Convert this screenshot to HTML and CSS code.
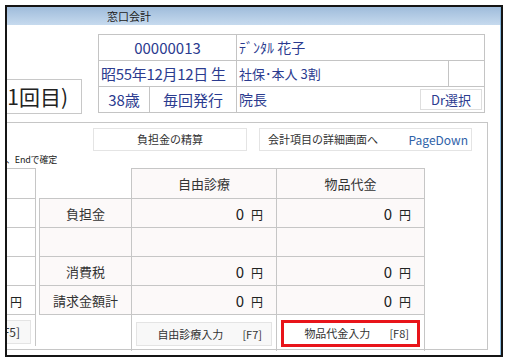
FILE: index.html
```html
<!DOCTYPE html>
<html lang="ja">
<head>
    <meta charset="UTF-8">
    <meta name="viewport" content="width=device-width, initial-scale=1.0">
    <title>窓口会計</title>
    <link rel="stylesheet" href="styles.css">
</head>
<body>

    <div class="window">
        <div class="titlebar">窓口会計</div>

        <div class="client">
            <!-- Patient header -->
            <div class="header">
                <div class="visit-box">1回目)</div>
                <table class="patient">
                    <colgroup>
                        <col class="c-age">
                        <col class="c-issue">
                        <col class="c-ins">
                        <col class="c-rest">
                    </colgroup>
                    <tr>
                        <td colspan="2" class="center">00000013</td>
                        <td colspan="2" class="name">ﾃﾞﾝﾀﾙ 花子</td>
                    </tr>
                    <tr>
                        <td colspan="2" class="birth">昭55年12月12日 生</td>
                        <td class="small">社保･本人 3割</td>
                        <td></td>
                    </tr>
                    <tr>
                        <td class="center">38歳</td>
                        <td class="center">毎回発行</td>
                        <td colspan="2">
                            <div class="doctor">
                                <span>院長</span>
                                <div class="dr-btn">Dr選択</div>
                            </div>
                        </td>
                    </tr>
                </table>
            </div>

            <!-- Accounting panel -->
            <div class="panel">
                <div class="actions">
                    <div class="btn settle">負担金の精算</div>
                    <div class="btn detail">
                        <span>会計項目の詳細画面へ</span>
                        <span class="key">PageDown</span>
                    </div>
                </div>
                <div class="hint">後、Endで確定</div>

                <div class="tables">
                    <table class="side">
                        <tr class="r-head"><td></td></tr>
                        <tr class="r-row"><td><div class="field"></div></td></tr>
                        <tr class="r-row"><td></td></tr>
                        <tr class="r-row"><td></td></tr>
                        <tr class="r-row"><td class="val"><span class="yen">円</span></td></tr>
                        <tr class="r-btn"><td><div class="fbtn f5">[F5]</div></td></tr>
                    </table>

                    <table class="amounts">
                        <colgroup>
                            <col class="c-label">
                            <col class="c-free">
                            <col class="c-goods">
                        </colgroup>
                        <tr class="r-head">
                            <td class="blank"></td>
                            <td class="head">自由診療</td>
                            <td class="head">物品代金</td>
                        </tr>
                        <tr class="r-row">
                            <td class="label">負担金</td>
                            <td class="val"><span class="num">0</span><span class="yen">円</span></td>
                            <td class="val"><span class="num">0</span><span class="yen">円</span></td>
                        </tr>
                        <tr class="r-row">
                            <td class="label"></td>
                            <td class="val"></td>
                            <td class="val"></td>
                        </tr>
                        <tr class="r-row">
                            <td class="label">消費税</td>
                            <td class="val"><span class="num">0</span><span class="yen">円</span></td>
                            <td class="val"><span class="num">0</span><span class="yen">円</span></td>
                        </tr>
                        <tr class="r-row">
                            <td class="label">請求金額計</td>
                            <td class="val"><span class="num">0</span><span class="yen">円</span></td>
                            <td class="val"><span class="num">0</span><span class="yen">円</span></td>
                        </tr>
                        <tr class="r-btn">
                            <td class="blank"></td>
                            <td class="btn-cell"><div class="fbtn"><span>自由診療入力</span><span>[F7]</span></div></td>
                            <td class="btn-cell"><div class="fbtn active"><span>物品代金入力</span><span>[F8]</span></div></td>
                        </tr>
                    </table>
                </div>
            </div>
        </div>
    </div>

</body>
</html>
```

FILE: styles.css
```css
body {
    margin: 0;
    background-color: #ffffff;
    font-family: "Noto Sans CJK JP", "Noto Sans", sans-serif;
    color: #333;
}

.window {
    width: 498px;
    height: 352px;
    margin: 5px 0 0 5px;
    border: 2px solid #151515;
    box-sizing: border-box;
    overflow: hidden;
    display: flex;
    flex-direction: column;
}

.titlebar {
    height: 18px;
    line-height: 18px;
    padding-left: 100px;
    font-size: 11px;
    color: #222;
    background: linear-gradient(#9fbcdb, #c6daee);
    border-right: 1px solid #7fb0d8;
}

.client {
    flex: 1;
    background-color: #fff;
    border-right: 1px solid #8dbde0;
}

/* Header */
.header {
    display: flex;
    align-items: flex-start;
    height: 97px;
}

.visit-box {
    flex: none;
    width: 115px;
    height: 35px;
    margin: 54px 0 0 -40px;
    border: 1px solid #c8c8c8;
    box-sizing: border-box;
    padding-right: 13px;
    text-align: right;
    white-space: nowrap;
    font-size: 21px;
    line-height: 32px;
    color: #222;
}

.patient {
    margin: 9px 0 0 16px;
    width: 386px;
    table-layout: fixed;
    border-collapse: collapse;
    color: #2b3b8f;
    font-size: 15px;
}

.patient td {
    height: 25px;
    padding: 0 2px;
    border: 1px solid #c4c4c4;
    white-space: nowrap;
    line-height: 25px;
}

.c-age { width: 51px; }
.c-issue { width: 87px; }
.c-ins { width: 212px; }
.c-rest { width: 36px; }

.patient .center {
    text-align: center;
}

.patient .birth {
    padding: 0 2px;
    font-size: 15px;
    letter-spacing: -0.3px;
}

.patient .name {
    font-size: 14px;
}

.patient .small {
    font-size: 13px;
}

.doctor {
    display: flex;
    align-items: center;
    justify-content: space-between;
    font-size: 14px;
}

.dr-btn {
    width: 62px;
    height: 21px;
    box-sizing: border-box;
    border: 1px solid #dedede;
    padding-right: 10px;
    text-align: right;
    font-size: 13px;
    line-height: 19px;
}

/* Panel */
.panel {
    width: 481px;
    height: 228px;
    border: 1px solid #c6c6c6;
    border-left: none;
    box-sizing: border-box;
}

.actions {
    display: flex;
    gap: 12px;
    padding: 5px 0 0 86px;
}

.btn {
    height: 23px;
    box-sizing: border-box;
    border: 1px solid #e4e4e4;
    background-color: #fff;
    font-size: 11px;
    line-height: 21px;
    color: #333;
}

.settle {
    width: 154px;
    text-align: center;
}

.detail {
    width: 213px;
    display: flex;
    justify-content: space-between;
    padding: 0 3px 0 8px;
}

.detail .key {
    font-size: 12px;
    color: #2f62a8;
}

.hint {
    width: 60px;
    height: 17px;
    margin-left: -10px;
    text-align: right;
    font-size: 9px;
    line-height: 17px;
    letter-spacing: -0.2px;
    white-space: nowrap;
    color: #222;
}

.tables {
    display: flex;
    align-items: flex-start;
}

table.side,
table.amounts {
    border-collapse: collapse;
    table-layout: fixed;
}

.side {
    width: 60px;
    margin-left: -31px;
}

.amounts {
    width: 386px;
    margin-left: 3px;
}

.c-label { width: 92px; }
.c-free { width: 145px; }
.c-goods { width: 148px; }

.side td,
.amounts td {
    padding: 0;
    border: 1px solid #c6c6c6;
    white-space: nowrap;
}

.r-head td { height: 29px; }
.r-row td { height: 28px; }
.r-btn td {
    height: 31px;
    border-bottom: none;
}

.amounts td.blank {
    border: none;
}

.amounts .head,
.amounts .label,
.amounts .val {
    background-color: #fcf9f9;
}

.head {
    text-align: center;
    font-size: 13px;
}

.label {
    text-align: center;
    padding-right: 8px;
    font-size: 13px;
}

.val {
    text-align: right;
    padding-right: 13px !important;
    color: #222;
}

.num {
    font-size: 15px;
}

.yen {
    margin-left: 7px;
    font-size: 12px;
}

.field {
    height: 23px;
    margin-right: 28px;
    box-sizing: border-box;
    border: 1px solid #bdbdbd;
}

.btn-cell {
    padding: 3px 4px 2px 4px !important;
}

.fbtn {
    height: 24px;
    box-sizing: border-box;
    border: 1px solid #e4e4e4;
    background-color: #f8f8f8;
    display: flex;
    justify-content: flex-end;
    gap: 19px;
    padding-right: 9px;
    font-size: 11px;
    line-height: 22px;
    color: #333;
}

.fbtn.f5 {
    margin: 3px 4px 0 0;
    padding-right: 10px;
    font-size: 12px;
}

.fbtn.active {
    height: 27px;
    border: 3px solid #e8141a;
    background-color: #fff;
    line-height: 21px;
    padding-right: 8px;
}
```
